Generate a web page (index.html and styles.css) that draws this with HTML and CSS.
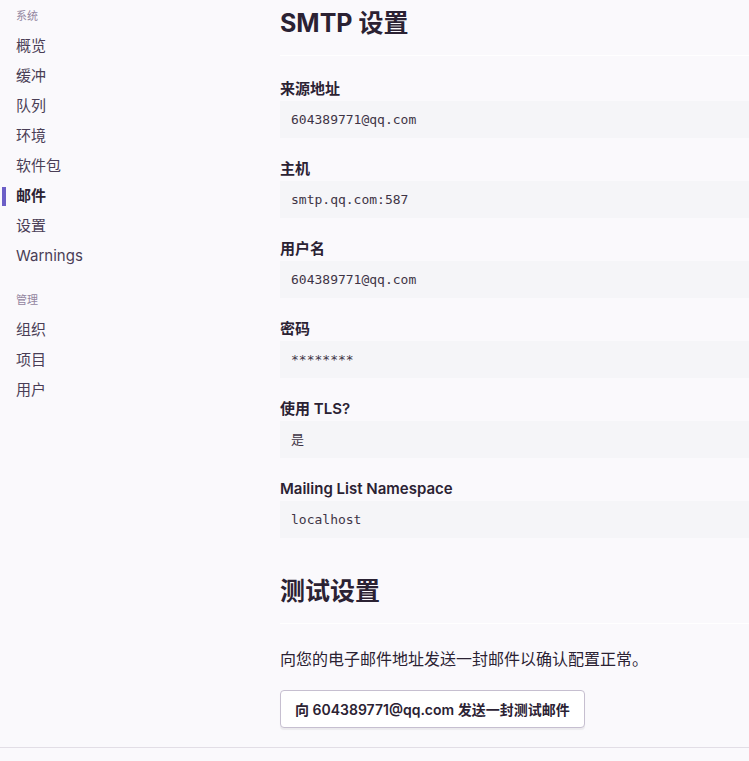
FILE: index.html
```html
<!DOCTYPE html>
<html lang="zh">
<head>
<meta charset="utf-8">
<title>邮件</title>
<link rel="stylesheet" href="styles.css">
</head>
<body>
<div class="layout">
  <nav class="sidebar">
    <div class="nav-section">
      <div class="nav-header">系统</div>
      <a class="nav-item">概览</a>
      <a class="nav-item">缓冲</a>
      <a class="nav-item">队列</a>
      <a class="nav-item">环境</a>
      <a class="nav-item">软件包</a>
      <a class="nav-item active">邮件</a>
      <a class="nav-item">设置</a>
      <a class="nav-item">Warnings</a>
    </div>
    <div class="nav-section">
      <div class="nav-header">管理</div>
      <a class="nav-item">组织</a>
      <a class="nav-item">项目</a>
      <a class="nav-item">用户</a>
    </div>
  </nav>
  <main class="content">
    <h3 class="page-title">SMTP 设置</h3>
    <dl class="fields">
      <dt class="field-label">来源地址</dt>
      <dd class="field-value">604389771@qq.com</dd>
      <dt class="field-label">主机</dt>
      <dd class="field-value">smtp.qq.com:587</dd>
      <dt class="field-label">用户名</dt>
      <dd class="field-value">604389771@qq.com</dd>
      <dt class="field-label">密码</dt>
      <dd class="field-value">********</dd>
      <dt class="field-label">使用 TLS?</dt>
      <dd class="field-value">是</dd>
      <dt class="field-label">Mailing List Namespace</dt>
      <dd class="field-value">localhost</dd>
    </dl>
    <h3 class="page-title second">测试设置</h3>
    <p class="help">向您的电子邮件地址发送一封邮件以确认配置正常。</p>
    <button class="btn">向 604389771@qq.com 发送一封测试邮件</button>
  </main>
</div>
<footer class="footer"></footer>
</body>
</html>
```
FILE: styles.css
```css
html, body {
  margin: 0;
  padding: 0;
  background: #faf9fc;
}
body {
  font-family: Inter, "Noto Sans CJK SC", sans-serif;
  color: #2b2233;
}
.layout {
  display: flex;
  align-items: flex-start;
}
.sidebar {
  width: 264px;
  flex: none;
  padding-left: 16px;
  padding-top: 1px;
}
.nav-section + .nav-section {
  margin-top: 14px;
}
.nav-header {
  font-size: 11px;
  line-height: 30px;
  color: #9386a0;
}
.nav-item {
  position: relative;
  display: block;
  font-size: 15px;
  line-height: 30px;
  color: #4a3e56;
}
.nav-item.active {
  font-weight: 700;
  color: #2b2233;
}
.nav-item.active::before {
  content: "";
  position: absolute;
  left: -14px;
  top: 6px;
  width: 4px;
  height: 19px;
  background: #6c5fc7;
}
.content {
  flex: 1;
  min-width: 0;
}
.page-title {
  margin: 7px 0 0;
  font-size: 25px;
  line-height: 32px;
  font-weight: 650;
  padding-bottom: 16px;
  border-bottom: 1px solid #ffffff;
}
.page-title.second {
  margin-top: 37px;
}
.fields {
  margin: 23px 0 0;
}
.field-label {
  font-size: 15px;
  line-height: 20px;
  font-weight: 600;
  margin-bottom: 2px;
}
.field-value {
  margin: 0 0 21px;
  padding: 10px 11px;
  background: #f5f5f8;
  font-family: "DejaVu Sans Mono", "Noto Sans CJK SC", monospace;
  font-size: 13px;
  line-height: 17px;
  color: #3e3446;
}
.field-value:last-child {
  margin-bottom: 0;
}
.help {
  margin: 23px 0 0;
  font-size: 16px;
  line-height: 24px;
  color: #2b2233;
}
.btn {
  margin-top: 19px;
  height: 38px;
  padding: 0 14px;
  background: #ffffff;
  border: 1px solid #c6bfd0;
  border-radius: 4px;
  box-shadow: 0 2px 1px rgba(0, 0, 0, 0.06);
  font-family: Inter, "Noto Sans CJK SC", sans-serif;
  font-size: 14px;
  font-weight: 600;
  color: #2b2233;
}
.footer {
  margin-top: 19px;
  border-top: 1px solid #e2dee6;
  height: 40px;
}
```
